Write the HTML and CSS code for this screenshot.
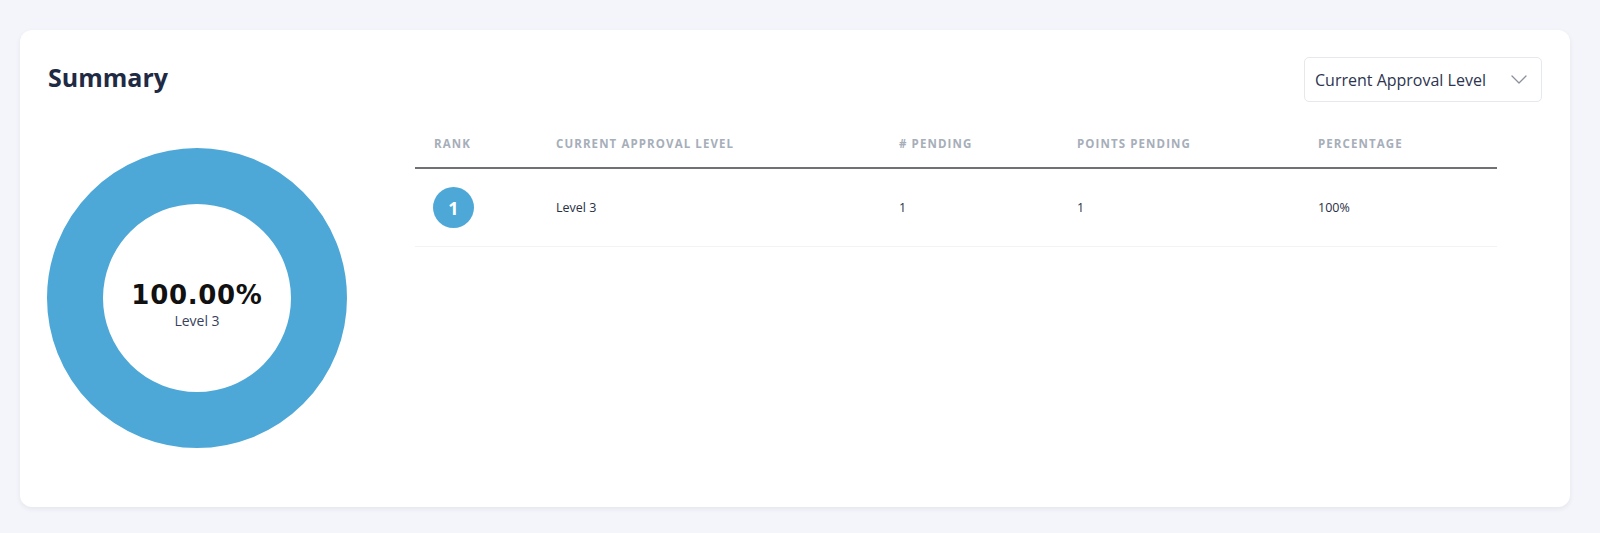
FILE: index.html
```html
<!DOCTYPE html>
<html lang="en">
<head>
<meta charset="utf-8">
<title>Summary</title>
<link rel="stylesheet" href="styles.css">
</head>
<body>
<main class="page">
  <section class="card">
    <header class="card-head">
      <h2 class="title">Summary</h2>
      <button class="select" type="button">
        <span class="select-label">Current Approval Level</span>
        <svg class="chev" width="16" height="9" viewBox="0 0 16 9" aria-hidden="true"><path d="M1 1 L8 8 L15 1" fill="none" stroke="#8b909c" stroke-width="1.3" stroke-linecap="round" stroke-linejoin="round"/></svg>
      </button>
    </header>
    <div class="card-body">
      <div class="donut">
        <svg class="donut-svg" width="300" height="300" viewBox="0 0 300 300" aria-hidden="true">
          <circle cx="150" cy="150" r="122" fill="none" stroke="#4da8d7" stroke-width="56"/>
        </svg>
        <div class="donut-center">
          <div class="donut-value">100.00%</div>
          <div class="donut-label">Level 3</div>
        </div>
      </div>
      <div class="table">
        <div class="row head">
          <div class="cell">Rank</div>
          <div class="cell">Current Approval Level</div>
          <div class="cell"># Pending</div>
          <div class="cell">Points Pending</div>
          <div class="cell">Percentage</div>
        </div>
        <div class="row body-row">
          <div class="cell"><span class="badge">1</span></div>
          <div class="cell">Level 3</div>
          <div class="cell">1</div>
          <div class="cell">1</div>
          <div class="cell">100%</div>
        </div>
      </div>
    </div>
  </section>
</main>
</body>
</html>
```
FILE: styles.css
```css
* { box-sizing: border-box; }
html, body { margin: 0; padding: 0; }
body {
  background: #f4f5fa;
  font-family: "Open Sans", "Liberation Sans", sans-serif;
  color: #2b3148;
  width: 1600px;
  height: 533px;
  overflow: hidden;
}
.page {
  padding: 30px 30px 0 20px;
}
.card {
  background: #ffffff;
  border-radius: 12px;
  box-shadow: 0 2px 5px rgba(30, 40, 80, 0.07);
  padding: 27px 28px 59px 27px;
  height: 477px;
}
.card-head {
  display: flex;
  justify-content: space-between;
  align-items: flex-start;
  height: 45px;
}
.title {
  margin: 0;
  padding: 3px 0 0 1px;
  font-size: 25px;
  line-height: 34px;
  font-weight: 700;
  color: #1f2a44;
}
.select {
  display: flex;
  align-items: center;
  justify-content: space-between;
  width: 238px;
  height: 45px;
  padding: 0 14px 0 10px;
  background: #fff;
  border: 1px solid #e6e8ed;
  border-radius: 5px;
  font-family: "Open Sans", "Liberation Sans", sans-serif;
  font-size: 16px;
  color: #2d3450;
  cursor: pointer;
}
.chev { display: block; }
.card-body {
  display: flex;
  gap: 68px;
  margin-top: 22px;
}
.donut {
  display: grid;
  place-items: center;
  width: 300px;
  height: 300px;
  margin-top: 24px;
  flex: none;
}
.donut-svg, .donut-center { grid-area: 1 / 1; }
.donut-svg { display: block; }
.donut-center {
  text-align: center;
  margin-top: 14px;
}
.donut-value {
  font-family: "DejaVu Sans", "Open Sans", sans-serif;
  font-size: 26px;
  line-height: 30px;
  font-weight: 700;
  color: #111111;
  letter-spacing: 0.7px;
}
.donut-label {
  font-size: 14px;
  line-height: 20px;
  margin-top: 1px;
  color: #3a3f5c;
}
.table {
  width: 1082px;
}
.row {
  display: grid;
  grid-template-columns: 122px 343px 178px 241px 198px;
}
.cell { padding-left: 19px; }
.head {
  height: 45px;
  align-items: center;
  border-bottom: 2px solid #707075;
  font-size: 11.5px;
  font-weight: 700;
  letter-spacing: 1.1px;
  text-transform: uppercase;
  color: #a6aeb9;
  padding-bottom: 4px;
}
.body-row {
  height: 78px;
  align-items: center;
  border-bottom: 1px solid #f2f3f6;
  font-size: 12.5px;
  color: #2a2f45;
}
.badge {
  display: flex;
  align-items: center;
  justify-content: center;
  width: 41px;
  height: 41px;
  border-radius: 50%;
  background: #4da8d7;
  color: #fff;
  font-size: 18px;
  font-weight: 700;
  margin-left: -1px;
}
```
